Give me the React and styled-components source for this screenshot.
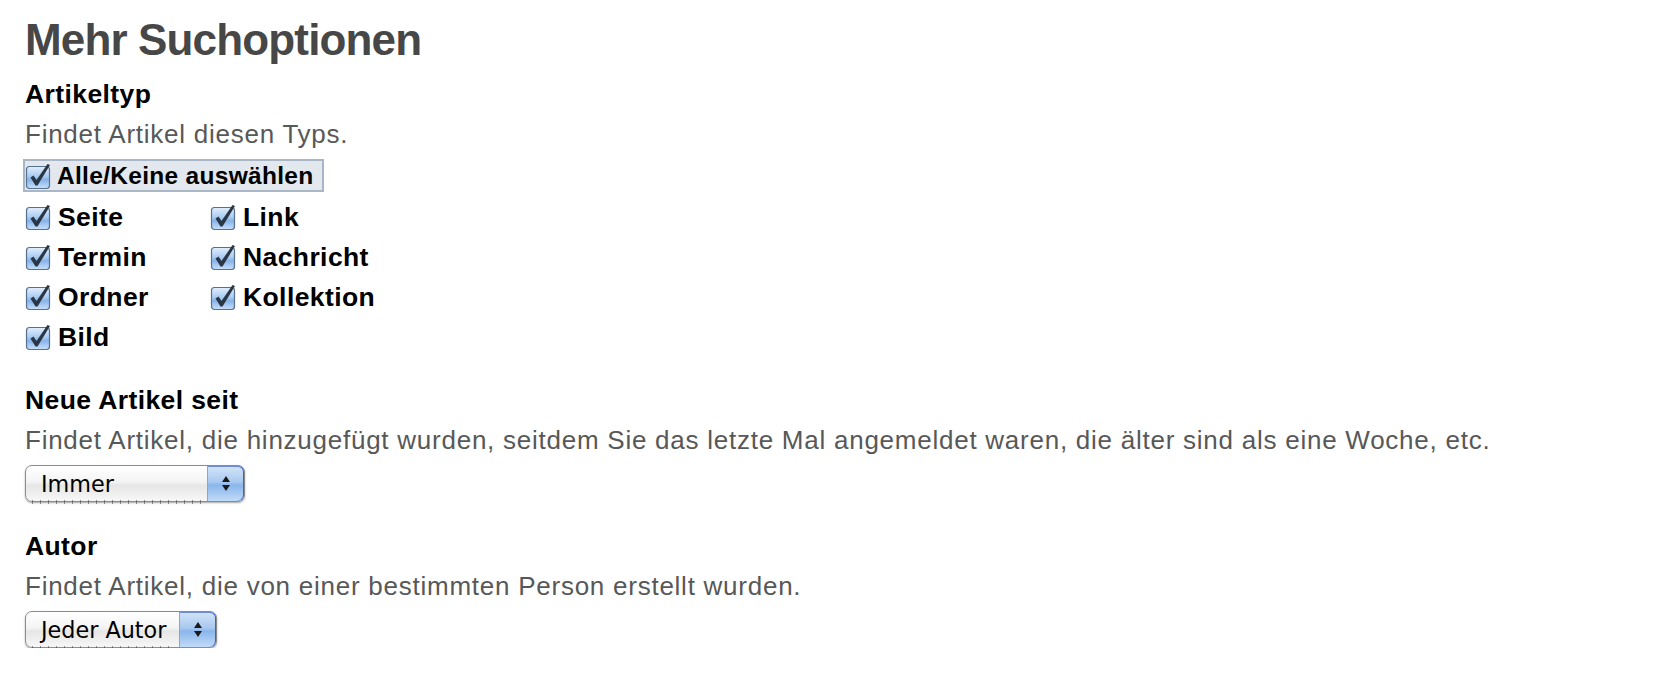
import styled, { createGlobalStyle } from "styled-components";

const GlobalStyle = createGlobalStyle`
  body {
    margin: 0;
    background: #ffffff;
    font-family: "Liberation Sans", Arial, sans-serif;
  }
`;

const Page = styled.div`
  padding: 14px 0 0 25px;
`;

const Heading = styled.h1`
  margin: 0;
  font-size: 44px;
  line-height: 52px;
  font-weight: bold;
  letter-spacing: -0.85px;
  color: #474747;
`;

const Field = styled.div`
  display: flex;
  flex-direction: column;
  align-items: flex-start;
  margin-top: ${(p) => p.$top}px;
`;

const Title = styled.div`
  font-size: 26.5px;
  line-height: 30px;
  font-weight: bold;
  letter-spacing: 0.4px;
  color: #000;
`;

const Help = styled.div`
  margin-top: 10px;
  font-size: 26px;
  line-height: 30px;
  letter-spacing: 0.75px;
  color: #585858;
`;

const ToggleAll = styled.label`
  display: inline-flex;
  align-items: center;
  gap: 4px;
  margin-top: 10px;
  height: 33px;
  box-sizing: border-box;
  padding: 0 8px 0 0;
  border: 2px solid #a8b6c6;
  background: #e3e8ef;
  margin-left: -2px;
  font-size: 24.5px;
  font-weight: bold;
  letter-spacing: 0.3px;
  color: #000;
`;

const Options = styled.div`
  display: grid;
  grid-template-columns: 185px auto;
  grid-auto-rows: 40px;
  margin-top: 5px;
`;

const Option = styled.label`
  display: flex;
  align-items: center;
  gap: 5px;
  font-size: 26.5px;
  font-weight: bold;
  letter-spacing: 0.4px;
  color: #000;
`;

const Popup = styled.div`
  position: relative;
  margin-top: 10px;
  display: flex;
  align-items: stretch;
  width: ${(p) => p.$width}px;
  height: 37px;
  box-sizing: border-box;
  border: 1px solid #8c8c8c;
  border-radius: 7px;
  background: linear-gradient(#ffffff 0%, #f4f4f4 45%, #e6e6e6 55%, #f7f7f7 100%);
  box-shadow: 0 1px 2px rgba(0, 0, 0, 0.35);
  font-family: "DejaVu Sans", "Liberation Sans", sans-serif;
  font-size: 22.3px;
  color: #000;

  &::after {
    content: "";
    position: absolute;
    left: 6px;
    right: 40px;
    bottom: -3px;
    height: 4px;
    background: repeating-linear-gradient(
      90deg,
      rgba(60, 60, 60, 0.55) 0 1px,
      transparent 1px 8px
    );
  }
`;

const PopupLabel = styled.div`
  flex: 1;
  display: flex;
  align-items: center;
  padding-left: 15px;
`;

const PopupArrows = styled.div`
  width: 36px;
  display: flex;
  flex-direction: column;
  align-items: center;
  justify-content: center;
  gap: 3px;
  border-left: 1px solid #8aa6cc;
  border-radius: 0 6px 6px 0;
  background: linear-gradient(#d3e4f8 0%, #a9c9f0 45%, #8ab6ec 55%, #c2dbf7 100%);
  box-shadow: inset -1px 0 0 #3f64c8, inset 0 1px 0 #6d8ed8;
`;

const Arrow = styled.span`
  width: 0;
  height: 0;
  border-left: 4px solid transparent;
  border-right: 4px solid transparent;
  ${(p) =>
    p.$up
      ? "border-bottom: 6px solid #1a1a1a;"
      : "border-top: 6px solid #1a1a1a;"}
`;

const CheckIcon = () => (
  <svg width="28" height="28" viewBox="0 0 28 28">
    <defs>
      <linearGradient id="cbFill" x1="0" y1="0" x2="0" y2="1">
        <stop offset="0" stopColor="#e2eefc" />
        <stop offset="0.45" stopColor="#a9cbf2" />
        <stop offset="0.6" stopColor="#86b3ea" />
        <stop offset="1" stopColor="#c9e0f9" />
      </linearGradient>
    </defs>
    <rect x="1.5" y="4.5" width="23" height="22" rx="3" fill="url(#cbFill)" stroke="#56708e" strokeWidth="1.2" />
    <path
      d="M5.5 15.5 L8.5 13.5 L11.5 18 L22.5 2 L25 3 L12.5 23.5 L10.5 23.5 Z"
      fill="#2a3644"
    />
  </svg>
);

const types = ["Seite", "Link", "Termin", "Nachricht", "Ordner", "Kollektion", "Bild"];

const Select = ({ width, value }) => (
  <Popup $width={width}>
    <PopupLabel>{value}</PopupLabel>
    <PopupArrows>
      <Arrow $up />
      <Arrow />
    </PopupArrows>
  </Popup>
);

export default function App() {
  return (
    <Page>
      <GlobalStyle />
      <Heading>Mehr Suchoptionen</Heading>

      <Field $top={13}>
        <Title>Artikeltyp</Title>
        <Help>Findet Artikel diesen Typs.</Help>
        <ToggleAll>
          <CheckIcon />
          Alle/Keine auswählen
        </ToggleAll>
        <Options>
          {types.map((t) => (
            <Option key={t}>
              <CheckIcon />
              {t}
            </Option>
          ))}
        </Options>
      </Field>

      <Field $top={28}>
        <Title>Neue Artikel seit</Title>
        <Help>
          Findet Artikel, die hinzugefügt wurden, seitdem Sie das letzte Mal
          angemeldet waren, die älter sind als eine Woche, etc.
        </Help>
        <Select width={220} value="Immer" />
      </Field>

      <Field $top={29}>
        <Title>Autor</Title>
        <Help>Findet Artikel, die von einer bestimmten Person erstellt wurden.</Help>
        <Select width={192} value="Jeder Autor" />
      </Field>
    </Page>
  );
}
